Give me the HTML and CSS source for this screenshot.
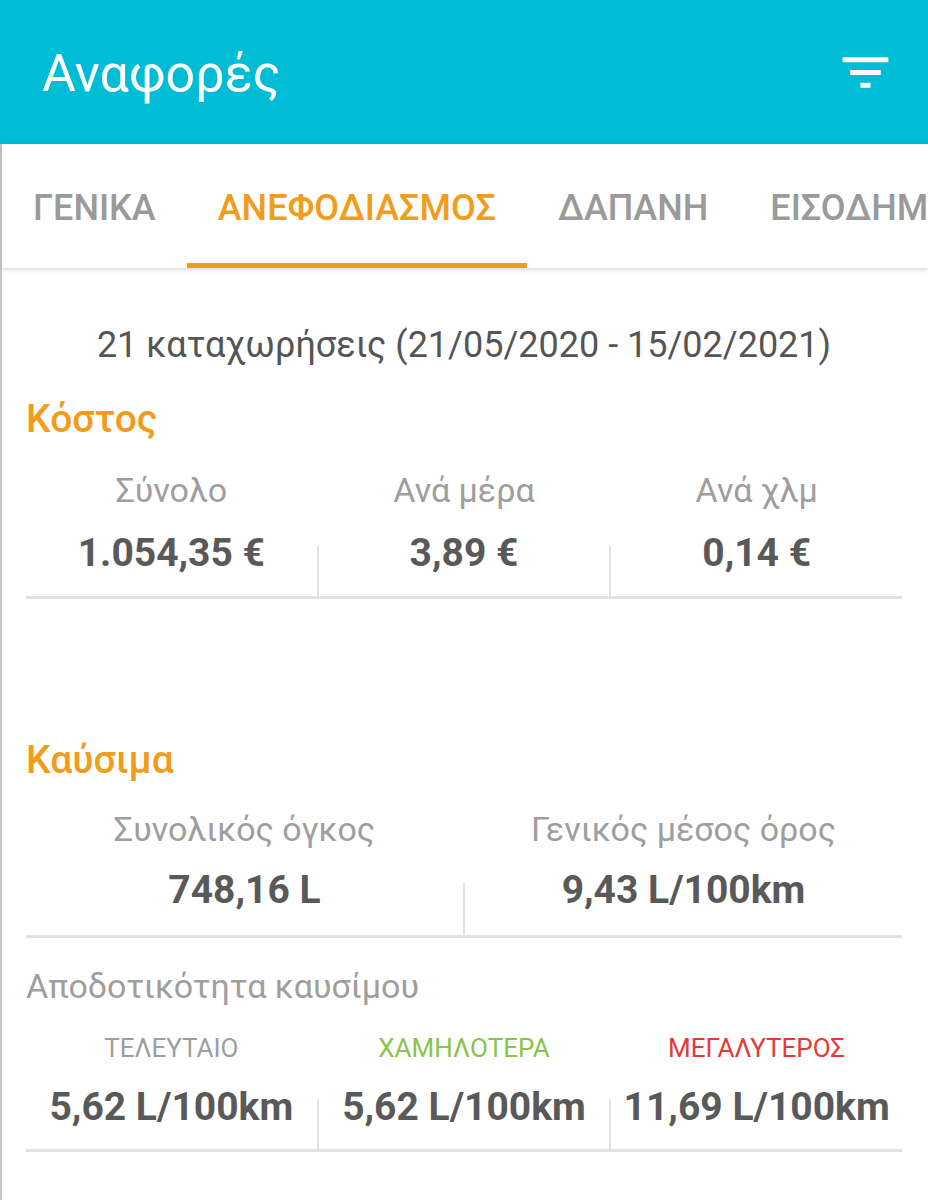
FILE: index.html
```html
<!DOCTYPE html>
<html lang="el">
<head>
<meta charset="utf-8">
<title>Αναφορές</title>
<link rel="stylesheet" href="styles.css">
</head>
<body>
<header class="appbar">
  <h1 class="appbar-title">Αναφορές</h1>
  <svg class="appbar-icon" viewBox="0 0 24 24" width="61" height="61" aria-hidden="true">
    <path fill="#fff" d="M10 18h4v-2h-4v2zM3 6v2h18V6H3zm3 7h12v-2H6v2z"/>
  </svg>
</header>
<div class="page">
  <nav class="tabs">
    <span class="tab">ΓΕΝΙΚΑ</span>
    <span class="tab active">ΑΝΕΦΟΔΙΑΣΜΟΣ</span>
    <span class="tab">ΔΑΠΑΝΗ</span>
    <span class="tab">ΕΙΣΟΔΗΜΑ</span>
  </nav>
  <main class="content">
    <p class="range">21 καταχωρήσεις (21/05/2020 - 15/02/2021)</p>

    <h2 class="section-title">Κόστος</h2>
    <div class="stats stats-3">
      <div class="label c1">Σύνολο</div>
      <div class="label c3">Ανά μέρα</div>
      <div class="label c5">Ανά χλμ</div>
      <div class="value c1">1.054,35 €</div>
      <div class="divider c2"></div>
      <div class="value c3">3,89 €</div>
      <div class="divider c4"></div>
      <div class="value c5">0,14 €</div>
    </div>

    <h2 class="section-title fuel">Καύσιμα</h2>
    <div class="stats stats-2">
      <div class="label c1">Συνολικός όγκος</div>
      <div class="label c3">Γενικός μέσος όρος</div>
      <div class="value c1">748,16 L</div>
      <div class="divider c2 tall"></div>
      <div class="value c3">9,43 L/100km</div>
    </div>

    <div class="subhead">Αποδοτικότητα καυσίμου</div>
    <div class="stats stats-3 small">
      <div class="caps c1">ΤΕΛΕΥΤΑΙΟ</div>
      <div class="caps green c3">ΧΑΜΗΛΟΤΕΡΑ</div>
      <div class="caps red c5">ΜΕΓΑΛΥΤΕΡΟΣ</div>
      <div class="value c1">5,62 L/100km</div>
      <div class="divider c2"></div>
      <div class="value c3">5,62 L/100km</div>
      <div class="divider c4"></div>
      <div class="value c5">11,69 L/100km</div>
    </div>
  </main>
</div>
</body>
</html>
```

FILE: styles.css
```css
* { box-sizing: border-box; }

html, body {
  margin: 0;
  padding: 0;
  background: #fff;
  font-family: Roboto, "Noto Sans", "DejaVu Sans", sans-serif;
}

body {
  width: 928px;
  min-height: 1200px;
  overflow: hidden;
}

.appbar {
  height: 144px;
  background: #00bcd4;
  display: flex;
  align-items: center;
  justify-content: space-between;
  padding: 3px 32px 0 42px;
}

.appbar-title {
  margin: 0;
  color: #fff;
  font-size: 52px;
  font-weight: 400;
  line-height: 61px;
}

.appbar-icon {
  display: block;
  margin-top: -3px;
}

.page {
  border-left: 2px solid #c7c7c7;
  min-height: 1056px;
}

.tabs {
  display: flex;
  white-space: nowrap;
  overflow: hidden;
  background: #fff;
  box-shadow: 0 2px 4px rgba(0, 0, 0, 0.14);
  position: relative;
}

.tab {
  flex: none;
  padding: 43px 31px 34px;
  font-size: 36px;
  line-height: 42px;
  font-weight: 500;
  color: #9a9a9a;
  border-bottom: 5px solid transparent;
}

.tab.active {
  color: #f39c1a;
  border-bottom-color: #f39c1a;
}

.content {
  padding: 0 26px 0 24px;
}

.range {
  margin: 56px 0 0;
  text-align: center;
  font-size: 36px;
  line-height: 42px;
  color: #555;
}

.section-title {
  margin: 31px 0 0;
  font-size: 39px;
  line-height: 44px;
  font-weight: 500;
  color: #f39c1a;
}

.section-title.fuel {
  margin-top: 139px;
}

.stats {
  display: grid;
  border-bottom: 3px solid #e2e2e2;
  margin-top: 30px;
}

.stats-2 { margin-top: 28px; }

.stats-3 { grid-template-columns: 1fr 2px 1fr 2px 1fr; }
.stats-2 { grid-template-columns: 1fr 2px 1fr; }

.c1 { grid-column: 1; }
.c2 { grid-column: 2; }
.c3 { grid-column: 3; }
.c4 { grid-column: 4; }
.c5 { grid-column: 5; }

.label {
  grid-row: 1;
  text-align: center;
  font-size: 34px;
  line-height: 38px;
  color: #9e9e9e;
}

.value {
  grid-row: 2;
  text-align: center;
  font-size: 39px;
  line-height: 46px;
  font-weight: 700;
  color: #595959;
  padding: 21px 0 20px;
  white-space: nowrap;
}

.stats-2 .value {
  padding: 19px 0 22px;
}

.divider {
  grid-row: 2;
  align-self: end;
  height: 50px;
  background: #e2e2e2;
}

.divider.tall { height: 52px; }

.subhead {
  margin-top: 29px;
  font-size: 34px;
  line-height: 38px;
  color: #9e9e9e;
}

.stats.small { margin-top: 28px; }

.caps {
  grid-row: 1;
  text-align: center;
  font-size: 26px;
  line-height: 30px;
  color: #9e9e9e;
}

.caps.green { color: #8bc34a; }
.caps.red { color: #e53935; }

.small .value {
  padding: 21px 0 19px;
}
```
